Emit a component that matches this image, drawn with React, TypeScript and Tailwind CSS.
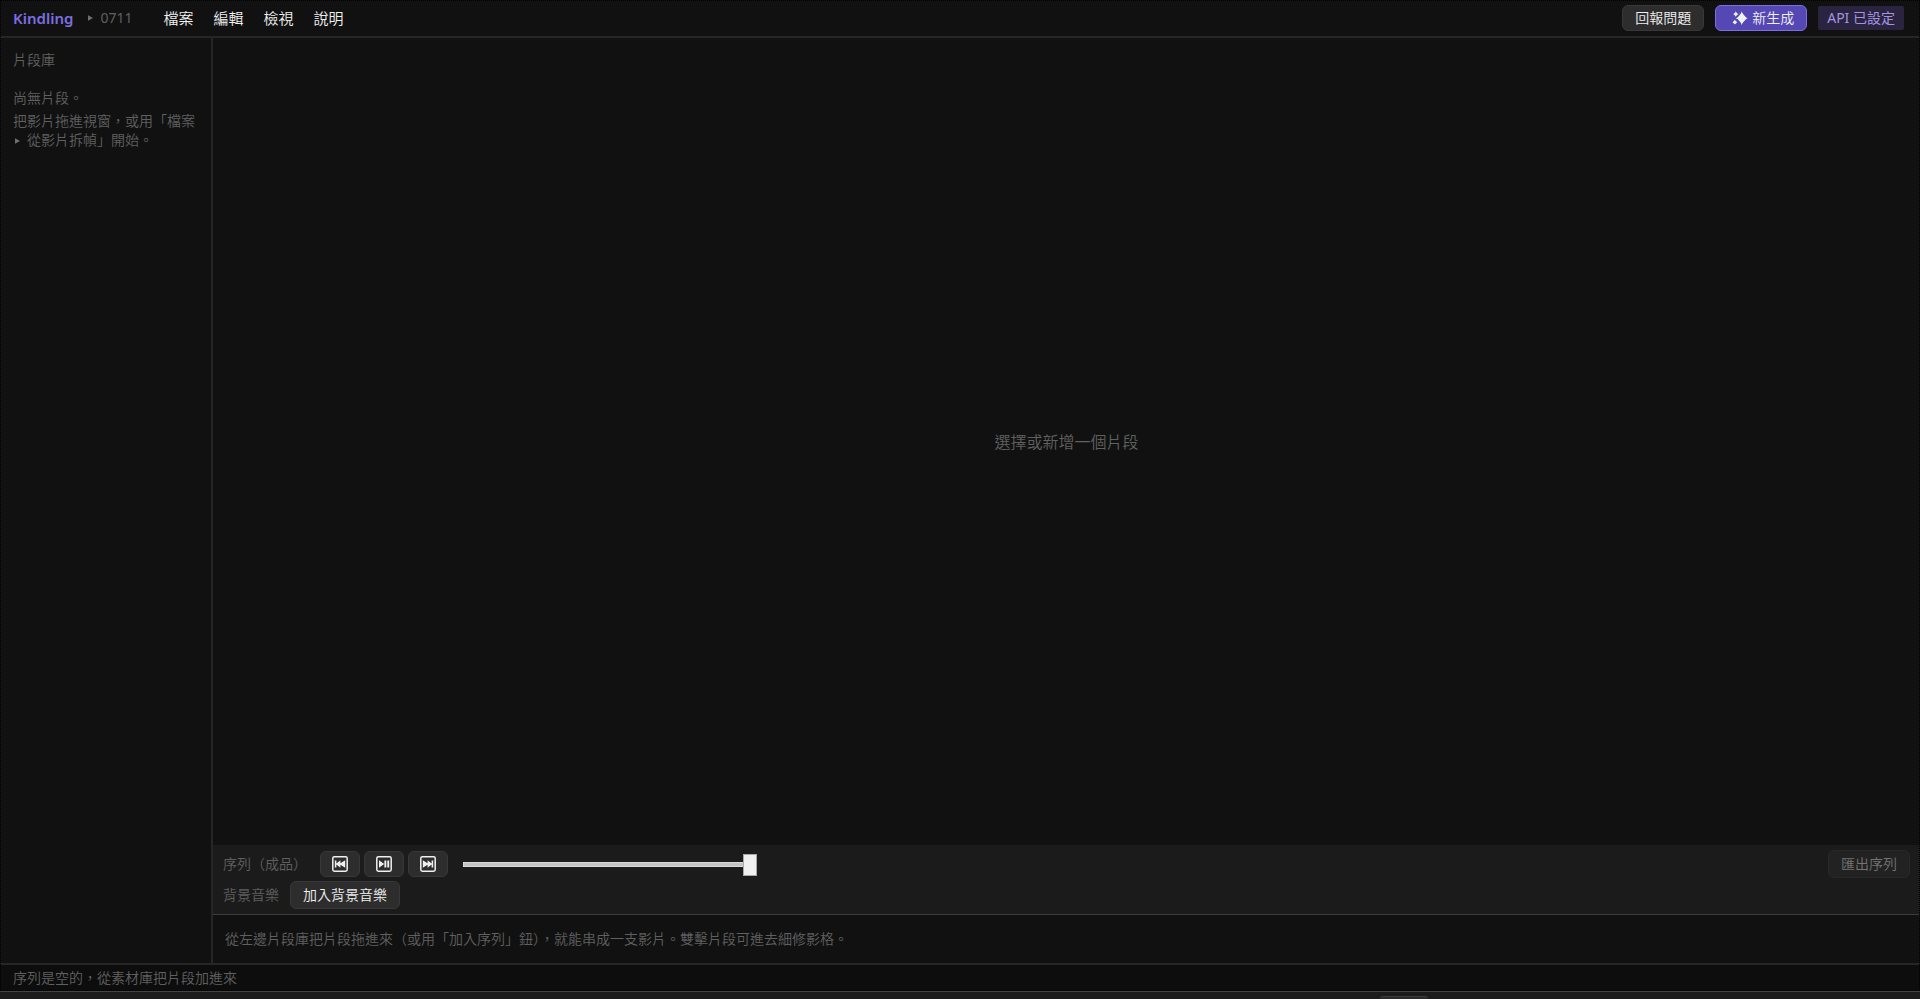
import React from "react";

const MENUS = ["檔案", "編輯", "檢視", "說明"];

type TransportKind = "prev" | "toggle" | "next";

const SHAPES: Record<TransportKind, string> = {
  prev: "M2.8 4.6h1.6v2.8L8.4 4.2v3L13.2 4.2v7.6L8.4 8.8v3L4.4 8.6v2.8H2.8z",
  toggle: "M3 4.2v7.6L8.2 8zM8.4 4.4h1.9v7.2H8.4zM11.3 4.4h1.9v7.2h-1.9z",
  next: "M13.2 4.6h-1.6v2.8L7.6 4.2v3L2.8 4.2v7.6L7.6 8.8v3L11.6 8.6v2.8h1.6z",
};

function TransportButton({ kind, label }: { kind: TransportKind; label: string }) {
  return (
    <button
      aria-label={label}
      className="flex h-[26px] w-10 items-center justify-center rounded-md border border-[#383838] bg-[#2d2d2d]"
    >
      <svg viewBox="0 0 16 16" className="size-4">
        <rect x="0.8" y="0.8" width="14.4" height="14.4" rx="1.6" fill="none" stroke="#f0f0f0" strokeWidth="1.5" />
        <path d={SHAPES[kind]} fill="#f0f0f0" />
      </svg>
    </button>
  );
}

function SparkleIcon() {
  return (
    <svg viewBox="0 0 16 16" className="size-4" fill="#f0f0f0">
      <path d="M9.8 1.2C10.6 5 12 6.9 15.8 8.2 12 9.5 10.6 11.4 9.8 15.2 9 11.4 7.4 9.5 3.8 8.2 7.4 6.9 9 5 9.8 1.2Z" />
      <path d="M9.8 2.6 13 6.2 14.6 8.2 13 10.2 9.8 13.8 6.9 10.4 5.2 8.2 6.9 6Z" />
      <path d="M3.8 1.2C4.2 2.9 4.9 3.6 6.6 4.1 4.9 4.6 4.2 5.3 3.8 7 3.4 5.3 2.7 4.6 1 4.1 2.7 3.6 3.4 2.9 3.8 1.2Z" />
      <path d="M2.9 9.6C3.2 11.1 3.9 11.8 5.4 12.2 3.9 12.6 3.2 13.3 2.9 14.8 2.6 13.3 1.9 12.6.4 12.2 1.9 11.8 2.6 11.1 2.9 9.6Z" />
      <circle cx="3.8" cy="4.1" r="1.7" />
      <circle cx="2.9" cy="12.2" r="1.6" />
    </svg>
  );
}

function Header() {
  return (
    <header className="flex h-[38px] shrink-0 items-center border-b-2 border-[#262626] pr-4 pl-[13px]">
      <h1 className="text-[15px] font-semibold text-[#7c6fe0]">Kindling</h1>
      <div className="ml-[13px] flex items-center gap-1.5 text-sm text-[#606060]">
        <svg viewBox="0 0 8 8" className="size-2" fill="#707070">
          <path d="M2 1.2 7 4 2 6.8Z" />
        </svg>
        <span className="font-normal">0711</span>
      </div>
      <nav className="ml-[31px] flex gap-5 text-[15px] text-[#f0f0f0]">
        {MENUS.map((name) => (
          <button key={name}>{name}</button>
        ))}
      </nav>
      <div className="ml-auto flex items-center gap-[11px] text-sm">
        <button className="flex h-[26px] items-center rounded-md border border-[#383838] bg-[#2d2d2d] px-3 text-[#f0f0f0]">
          回報問題
        </button>
        <button className="flex h-[26px] items-center gap-1 rounded-md border border-[#7c6fe0] bg-[#5548b4] pr-3 pl-4 text-[#f0f0f0]">
          <SparkleIcon />
          新生成
        </button>
        <span className="flex h-6 items-center rounded-xs bg-[#2a2440] px-[9px] font-normal text-[#a394e0]">API 已設定</span>
      </div>
    </header>
  );
}

function Library() {
  return (
    <aside className="w-[213px] shrink-0 border-r-2 border-[#262626] px-[13px] pt-3 text-sm text-[#606060]">
      <h2>片段庫</h2>
      <p className="mt-[18px]">尚無片段。</p>
      <p className="mt-[3px] leading-[19px]">
        把影片拖進視窗，或用「檔案{" "}
        <span className="whitespace-nowrap">
          <svg viewBox="0 0 8 8" className="mr-1.5 inline size-2" fill="#707070">
            <path d="M2 1.2 7 4 2 6.8Z" />
          </svg>
          從影片拆幀」開始。
        </span>
      </p>
    </aside>
  );
}

function Sequencer() {
  return (
    <section className="shrink-0 text-sm text-[#606060]">
      <div className="flex flex-col border-b border-[#3c3c3c] bg-[#1b1b1b] px-2.5 py-[5px]">
        <div className="flex h-7 items-center">
          <label htmlFor="seek" className="w-[97px]">
            序列（成品）
          </label>
          <div className="flex gap-1">
            <TransportButton kind="prev" label="上一個" />
            <TransportButton kind="toggle" label="播放或暫停" />
            <TransportButton kind="next" label="下一個" />
          </div>
          <input
            id="seek"
            type="range"
            defaultValue={100}
            className="ml-[15px] h-[22px] w-[294px] appearance-none bg-transparent [&::-webkit-slider-runnable-track]:h-[5px] [&::-webkit-slider-runnable-track]:bg-[#c4c4c4] [&::-webkit-slider-runnable-track]:shadow-[inset_0_0_0_1px_#d8d8d8] [&::-webkit-slider-thumb]:-mt-2 [&::-webkit-slider-thumb]:h-[22px] [&::-webkit-slider-thumb]:w-3.5 [&::-webkit-slider-thumb]:appearance-none [&::-webkit-slider-thumb]:border [&::-webkit-slider-thumb]:border-[#a8a8a8] [&::-webkit-slider-thumb]:bg-[#f0f0f0]"
          />
          <button disabled className="ml-auto h-7 rounded-md border border-[#282828] bg-[#222] px-3 text-[#747474]">
            匯出序列
          </button>
        </div>
        <div className="mt-[3px] flex h-7 items-center gap-[11px]">
          <span>背景音樂</span>
          <button className="h-7 rounded-md border border-[#383838] bg-[#2d2d2d] px-3 text-[#f0f0f0]">加入背景音樂</button>
        </div>
      </div>
      <p className="flex h-12 items-center px-3">
        從左邊片段庫把片段拖進來（或用「加入序列」鈕），就能串成一支影片。雙擊片段可進去細修影格。
      </p>
    </section>
  );
}

export default function App() {
  return (
    <div
      lang="zh-Hant"
      className="flex h-screen flex-col overflow-hidden bg-[#111] font-['Noto_Sans','Noto_Sans_CJK_TC',sans-serif] [font-weight:350]"
    >
      <div className="flex min-h-0 grow flex-col outline-1 -outline-offset-1 outline-black outline-dotted">
        <Header />
        <div className="flex min-h-0 grow">
          <Library />
          <main className="flex min-w-0 grow flex-col">
            <div className="flex grow items-center justify-center text-base text-[#606060]">選擇或新增一個片段</div>
            <Sequencer />
          </main>
        </div>
        <footer className="flex h-7 shrink-0 items-center border-t-2 border-[#262626] bg-[#0d0d0d] px-[13px] text-sm text-[#606060]">
          序列是空的，從素材庫把片段加進來
        </footer>
      </div>
      <div className="flex h-2 shrink-0 flex-col border-t border-[#444] bg-[#1c1c1c]">
        <div className="mt-auto flex h-[3px] justify-end pr-[492px]">
          <div className="w-12 rounded-t-sm border-t border-[#3a3a3a] bg-[#2a2a2a]" />
        </div>
      </div>
    </div>
  );
}
